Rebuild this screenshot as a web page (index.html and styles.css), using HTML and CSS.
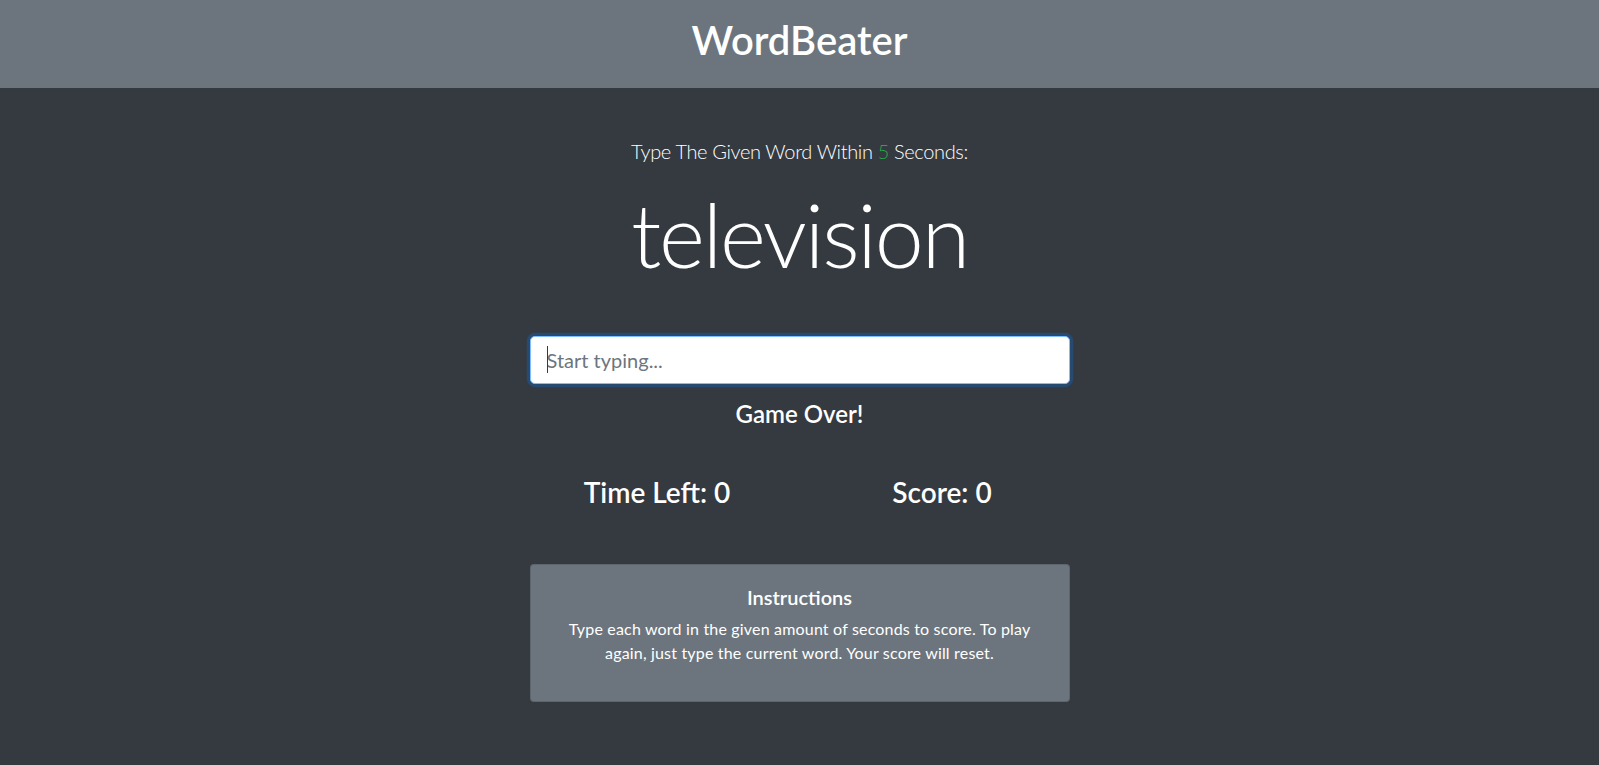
FILE: index.html
```html
<!DOCTYPE html>
<html lang="en">
<head>
<meta charset="utf-8">
<title>WordBeater</title>
<link rel="stylesheet" href="styles.css">
</head>
<body>
  <header class="site-header">
    <h1 class="site-title">WordBeater</h1>
  </header>
  <main class="game">
    <p class="lead">Type The Given Word Within <span class="seconds">5</span> Seconds:</p>
    <h2 class="current-word">television</h2>
    <div class="input-wrap">
      <input type="text" class="word-input" placeholder="Start typing..." autofocus>
      <span class="caret"></span>
    </div>
    <h4 class="message">Game Over!</h4>
    <div class="stats">
      <h3 class="stat">Time Left: <span>0</span></h3>
      <h3 class="stat">Score: <span>0</span></h3>
    </div>
    <div class="card">
      <h5 class="card-title">Instructions</h5>
      <p class="card-text">Type each word in the given amount of seconds to score. To play again, just type the current word. Your score will reset.</p>
    </div>
  </main>
</body>
</html>
```
FILE: styles.css
```css
html, body {
  margin: 0;
  padding: 0;
}
body {
  background: #343a40;
  color: #fff;
  font-family: Lato, "Liberation Sans", sans-serif;
  font-size: 16px;
  line-height: 1.5;
}
.site-header {
  background: #6c757d;
  text-align: center;
  padding: 16px;
  margin-bottom: 48px;
}
.site-title {
  margin: 0 0 8px;
  font-size: 40px;
  font-weight: 600;
  line-height: 1.2;
}
.game {
  width: 540px;
  margin: 0 auto;
  text-align: center;
}
.lead {
  margin: 0 0 16px;
  font-size: 20px;
  font-weight: 300;
  line-height: 1.5;
  letter-spacing: -0.35px;
}
.seconds {
  color: #28a745;
}
.current-word {
  margin: 0 0 48px;
  font-size: 88px;
  font-weight: 300;
  line-height: 1.2;
  letter-spacing: -2.2px;
}
.input-wrap {
  position: relative;
}
.word-input {
  display: block;
  box-sizing: border-box;
  width: 100%;
  height: 48px;
  margin: 0;
  padding: 8px 16px;
  font-family: inherit;
  font-size: 20px;
  line-height: 1.5;
  color: #495057;
  background: #fff;
  border: 1px solid #80bdff;
  border-radius: 4.8px;
  box-shadow: 0 0 0 3.2px rgba(0, 123, 255, 0.25);
  outline: none;
  caret-color: transparent;
}
.word-input::placeholder {
  color: #6c757d;
  opacity: 1;
}
.caret {
  position: absolute;
  left: 17px;
  top: 10px;
  width: 1px;
  height: 27px;
  background: #343a40;
}
.message {
  margin: 16px 0 8px;
  font-size: 24px;
  font-weight: 600;
  line-height: 1.2;
}
.stats {
  display: grid;
  grid-template-columns: 1fr 1fr;
  margin: 48px -15px 0;
}
.stat {
  margin: 0 0 8px;
  font-size: 28px;
  font-weight: 600;
  line-height: 1.2;
}
.card {
  margin-top: 46px;
  background: #6c757d;
  border: 1px solid rgba(0, 0, 0, 0.125);
  border-radius: 4px;
  padding: 20px;
}
.card-title {
  margin: 0 0 8px;
  font-size: 20px;
  font-weight: 600;
  line-height: 1.2;
}
.card-text {
  margin: 0 0 16px;
  letter-spacing: 0.18px;
}
```
